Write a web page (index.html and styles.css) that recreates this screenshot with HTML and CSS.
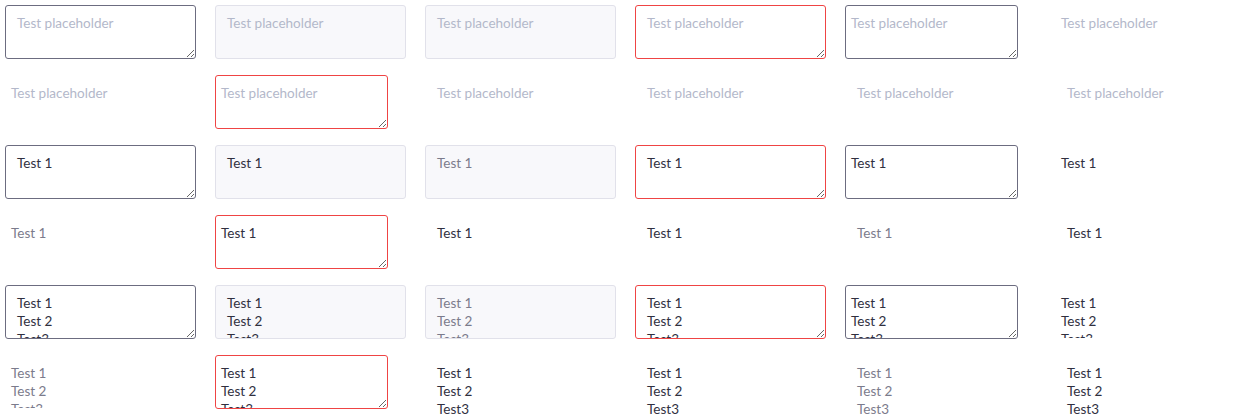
FILE: index.html
```html
<!DOCTYPE html>
<html>
<head>
<meta charset="utf-8">
<link rel="stylesheet" href="styles.css">
</head>
<body>
<div class="grid">
  <div class="cell"><textarea class="ta" placeholder="Test placeholder"></textarea></div>
  <div class="cell"><textarea class="ta readonly" placeholder="Test placeholder" readonly></textarea></div>
  <div class="cell"><textarea class="ta disabled" placeholder="Test placeholder" disabled></textarea></div>
  <div class="cell"><textarea class="ta error" placeholder="Test placeholder"></textarea></div>
  <div class="cell"><textarea class="ta compact" placeholder="Test placeholder"></textarea></div>
  <div class="cell"><textarea class="ta compact plain" placeholder="Test placeholder"></textarea></div>

  <div class="cell"><textarea class="ta compact plain muted" placeholder="Test placeholder" disabled></textarea></div>
  <div class="cell"><textarea class="ta compact error" placeholder="Test placeholder"></textarea></div>
  <div class="cell"><textarea class="ta plain" placeholder="Test placeholder"></textarea></div>
  <div class="cell"><textarea class="ta plain" placeholder="Test placeholder"></textarea></div>
  <div class="cell"><textarea class="ta plain muted" placeholder="Test placeholder" disabled></textarea></div>
  <div class="cell"><textarea class="ta plain" placeholder="Test placeholder"></textarea></div>

  <div class="cell"><textarea class="ta">Test 1</textarea></div>
  <div class="cell"><textarea class="ta readonly" readonly>Test 1</textarea></div>
  <div class="cell"><textarea class="ta disabled" disabled>Test 1</textarea></div>
  <div class="cell"><textarea class="ta error">Test 1</textarea></div>
  <div class="cell"><textarea class="ta compact">Test 1</textarea></div>
  <div class="cell"><textarea class="ta compact plain">Test 1</textarea></div>

  <div class="cell"><textarea class="ta compact plain muted" disabled>Test 1</textarea></div>
  <div class="cell"><textarea class="ta compact error">Test 1</textarea></div>
  <div class="cell"><textarea class="ta plain">Test 1</textarea></div>
  <div class="cell"><textarea class="ta plain">Test 1</textarea></div>
  <div class="cell"><textarea class="ta plain muted" disabled>Test 1</textarea></div>
  <div class="cell"><textarea class="ta plain">Test 1</textarea></div>

  <div class="cell"><textarea class="ta">Test 1
Test 2
Test3</textarea></div>
  <div class="cell"><textarea class="ta readonly" readonly>Test 1
Test 2
Test3</textarea></div>
  <div class="cell"><textarea class="ta disabled" disabled>Test 1
Test 2
Test3</textarea></div>
  <div class="cell"><textarea class="ta error">Test 1
Test 2
Test3</textarea></div>
  <div class="cell"><textarea class="ta compact">Test 1
Test 2
Test3</textarea></div>
  <div class="cell"><textarea class="ta compact plain">Test 1
Test 2
Test3</textarea></div>

  <div class="cell"><textarea class="ta compact plain muted" disabled>Test 1
Test 2
Test3</textarea></div>
  <div class="cell"><textarea class="ta compact error">Test 1
Test 2
Test3</textarea></div>
  <div class="cell"><textarea class="ta plain auto">Test 1
Test 2
Test3</textarea></div>
  <div class="cell"><textarea class="ta plain auto">Test 1
Test 2
Test3</textarea></div>
  <div class="cell"><textarea class="ta plain muted auto" disabled>Test 1
Test 2
Test3</textarea></div>
  <div class="cell"><textarea class="ta plain auto">Test 1
Test 2
Test3</textarea></div>
</div>
</body>
</html>
```

FILE: styles.css
```css
html, body {
  margin: 0;
  padding: 0;
  background: #ffffff;
}

.grid {
  display: grid;
  grid-template-columns: repeat(6, 200px);
  grid-auto-rows: 60px;
  column-gap: 10px;
  row-gap: 10px;
  padding: 5px;
}

.cell {
  min-width: 0;
}

.ta {
  display: block;
  box-sizing: border-box;
  width: 191px;
  height: 54px;
  margin: 0;
  padding: 8px 11px;
  border: 1px solid #6c6c80;
  border-radius: 3px;
  background: #ffffff;
  color: #30303f;
  font-family: Lato, "Liberation Sans", sans-serif;
  font-size: 13.5px;
  line-height: 18px;
  overflow: hidden;
  resize: vertical;
  outline: none;
}

.ta::placeholder {
  color: #b3b8ca;
  opacity: 1;
}

.ta.readonly {
  background: #f8f8fb;
  border-color: #e1e1ea;
  resize: none;
}

.ta.disabled {
  background: #f8f8fb;
  border-color: #e1e1ea;
  color: #7b7b8c;
  resize: none;
}

.ta.error {
  border-color: #ef4444;
}

.ta.compact {
  width: 173px;
  padding: 8px 5px;
}

.ta.plain {
  border-color: transparent;
  background: transparent;
  resize: none;
}

.ta.muted {
  color: #7b7b8c;
}

.ta.auto {
  height: 70px;
}
```
